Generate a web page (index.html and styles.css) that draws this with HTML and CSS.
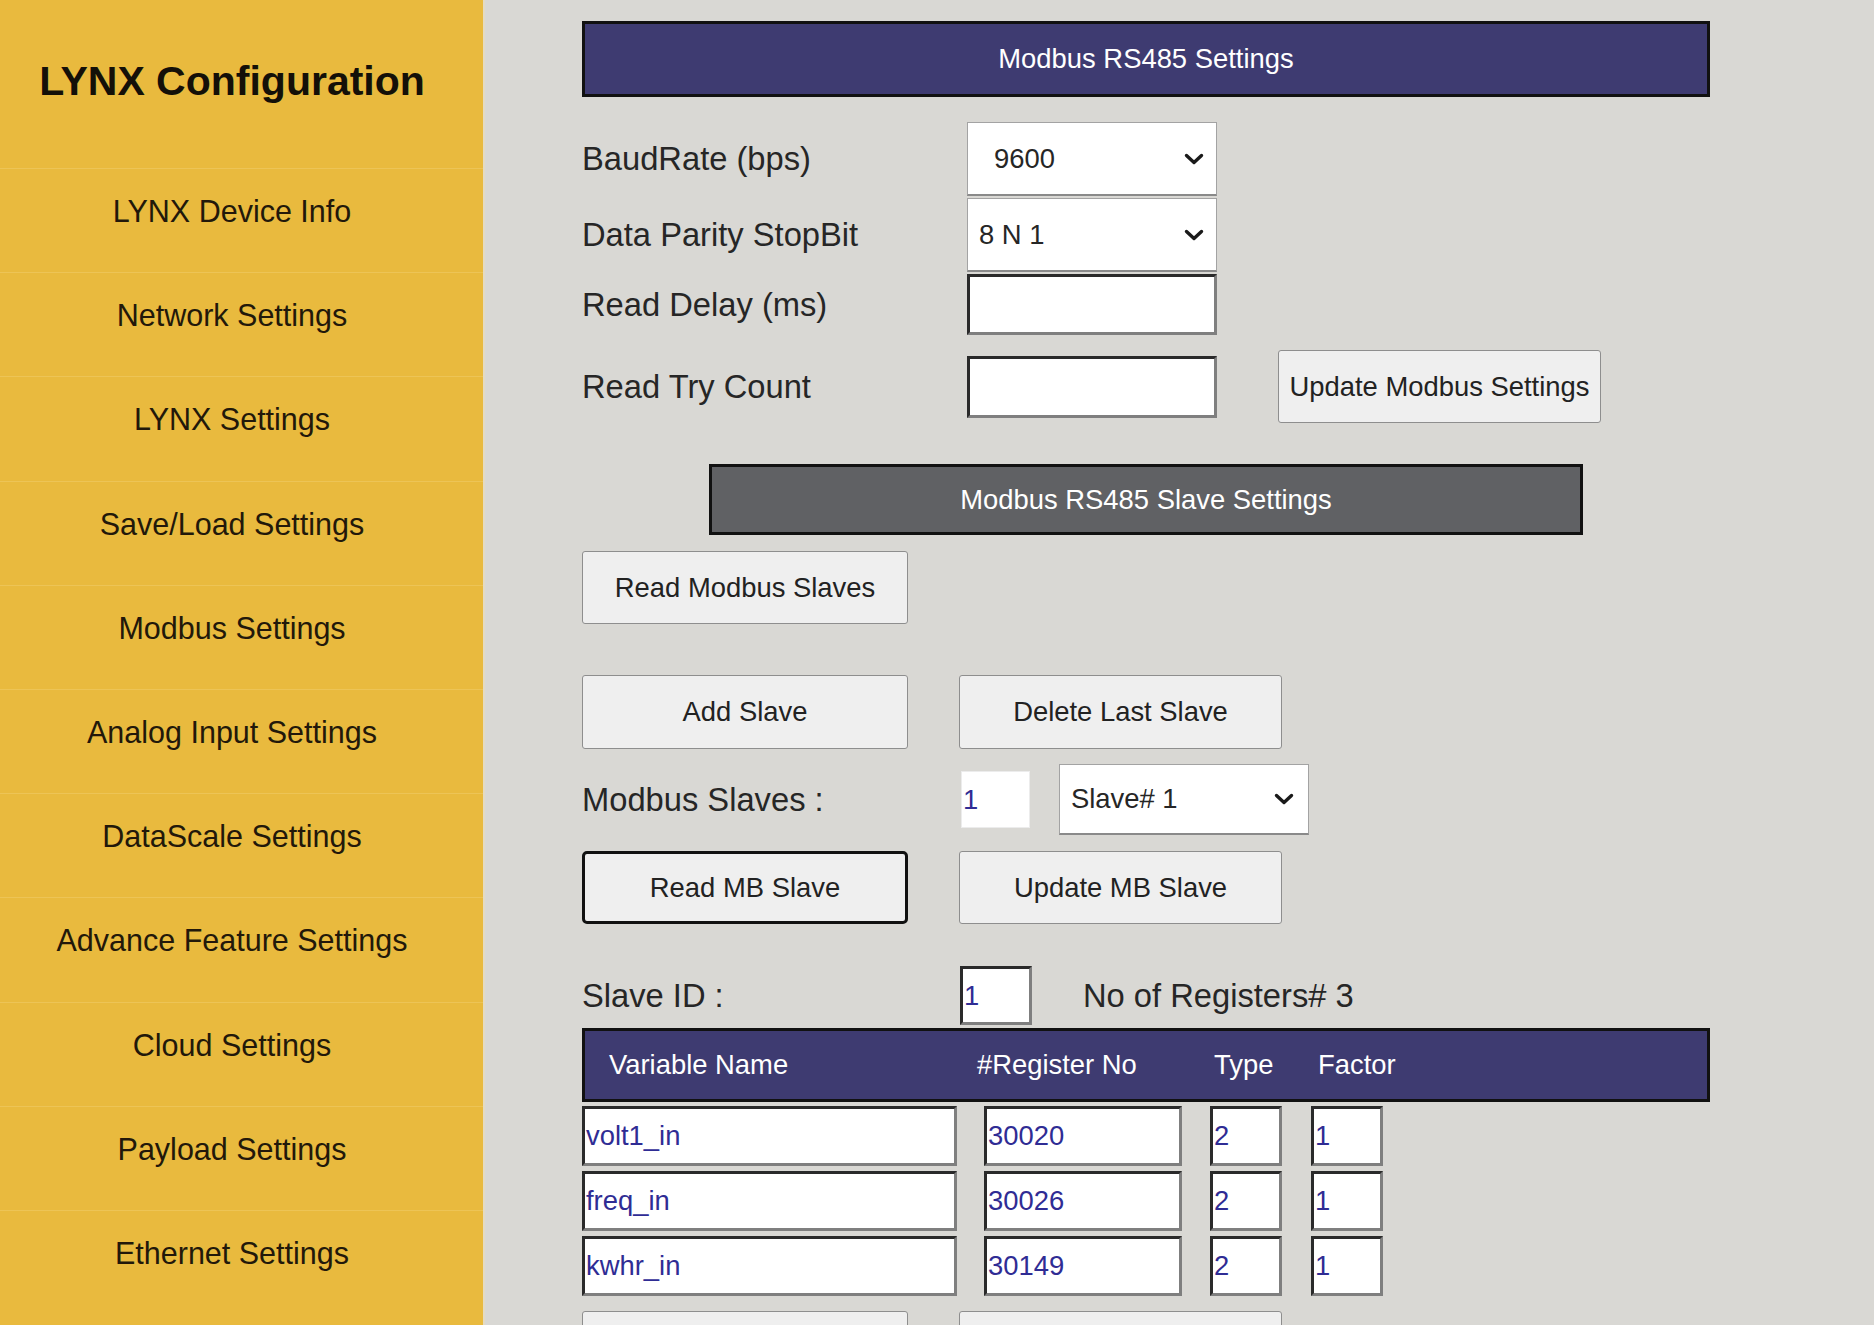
FILE: index.html
```html
<!DOCTYPE html>
<html lang="en">
<head>
<meta charset="utf-8">
<title>LYNX Configuration</title>
<link rel="stylesheet" href="styles.css">
</head>
<body>
<aside class="sidebar">
  <h1 class="brand">LYNX Configuration</h1>
  <nav class="menu">
    <a class="menu-item">LYNX Device Info</a>
    <a class="menu-item">Network Settings</a>
    <a class="menu-item">LYNX Settings</a>
    <a class="menu-item">Save/Load Settings</a>
    <a class="menu-item">Modbus Settings</a>
    <a class="menu-item">Analog Input Settings</a>
    <a class="menu-item">DataScale Settings</a>
    <a class="menu-item">Advance Feature Settings</a>
    <a class="menu-item">Cloud Settings</a>
    <a class="menu-item">Payload Settings</a>
    <a class="menu-item">Ethernet Settings</a>
  </nav>
</aside>
<main class="main">
  <div class="bar bar-navy">Modbus RS485 Settings</div>

  <div class="row row-baud">
    <span class="label">BaudRate (bps)</span>
    <div class="select select-wide"><span class="sel-text sel-indent">9600</span>
      <svg class="chev" viewBox="0 0 20 12" width="20" height="12"><path d="M2.5 2.5 L10 9.5 L17.5 2.5"/></svg></div>
  </div>
  <div class="row row-parity">
    <span class="label">Data Parity StopBit</span>
    <div class="select select-wide"><span class="sel-text">8 N 1</span>
      <svg class="chev" viewBox="0 0 20 12" width="20" height="12"><path d="M2.5 2.5 L10 9.5 L17.5 2.5"/></svg></div>
  </div>
  <div class="row row-delay">
    <span class="label">Read Delay (ms)</span>
    <div class="field field-delay"></div>
  </div>
  <div class="row row-try">
    <span class="label">Read Try Count</span>
    <div class="field field-try"></div>
    <button class="btn btn-update">Update Modbus Settings</button>
  </div>

  <div class="bar bar-gray">Modbus RS485 Slave Settings</div>

  <div class="row row-readall">
    <button class="btn btn-left">Read Modbus Slaves</button>
  </div>

  <div class="row row-add">
    <button class="btn btn-left">Add Slave</button>
    <button class="btn btn-right">Delete Last Slave</button>
  </div>

  <div class="row row-slaves">
    <span class="label label-slaves">Modbus Slaves :</span>
    <div class="count-box">1</div>
    <div class="select select-slave"><span class="sel-text">Slave# 1</span>
      <svg class="chev" viewBox="0 0 20 12" width="20" height="12"><path d="M2.5 2.5 L10 9.5 L17.5 2.5"/></svg></div>
  </div>

  <div class="row row-mb">
    <button class="btn btn-left btn-focus">Read MB Slave</button>
    <button class="btn btn-right">Update MB Slave</button>
  </div>

  <div class="row row-id">
    <span class="label label-id">Slave ID :</span>
    <div class="field field-id val">1</div>
    <span class="label reg-count">No of Registers# 3</span>
  </div>

  <div class="bar bar-navy table-head">
    <span>Variable Name</span>
    <span>#Register No</span>
    <span>Type</span>
    <span>Factor</span>
  </div>

  <div class="reg-rows">
    <div class="reg-row">
      <div class="field val c-name">volt1_in</div>
      <div class="field val c-reg">30020</div>
      <div class="field val c-type">2</div>
      <div class="field val c-fac">1</div>
    </div>
    <div class="reg-row">
      <div class="field val c-name">freq_in</div>
      <div class="field val c-reg">30026</div>
      <div class="field val c-type">2</div>
      <div class="field val c-fac">1</div>
    </div>
    <div class="reg-row">
      <div class="field val c-name">kwhr_in</div>
      <div class="field val c-reg">30149</div>
      <div class="field val c-type">2</div>
      <div class="field val c-fac">1</div>
    </div>
  </div>

  <div class="row row-bottom">
    <button class="btn btn-left" aria-label="Read registers"></button>
    <button class="btn btn-right" aria-label="Update registers"></button>
  </div>
</main>
</body>
</html>
```
FILE: styles.css
```css
html, body {
  margin: 0;
  padding: 0;
}
body {
  width: 1874px;
  height: 1325px;
  overflow: hidden;
  display: flex;
  font-family: "Liberation Sans", Arial, sans-serif;
  background: #d9d8d4;
}

/* ---------- sidebar ---------- */
.sidebar {
  width: 485px;
  flex: 0 0 485px;
  box-sizing: border-box;
  background: #e9ba3e;
  border-right: 2px solid #e4dbc2;
  height: 1325px;
}
.brand {
  margin: 0;
  height: 168px;
  box-sizing: border-box;
  padding: 56px 19px 0 0;
  line-height: 50px;
  font-size: 41px;
  font-weight: bold;
  color: #141008;
  text-align: center;
}
.menu {
  display: flex;
  flex-direction: column;
}
.menu-item {
  display: block;
  height: 104.2px;
  box-sizing: border-box;
  padding: 22px 19px 0 0;
  line-height: 40px;
  font-size: 30.5px;
  color: #22180a;
  text-align: center;
  border-top: 1px solid #edc456;
}

/* ---------- main ---------- */
.main {
  flex: 1;
  padding-left: 97px;
  background: #d9d8d4;
  color: #222;
}
.bar {
  box-sizing: border-box;
  border: 3px solid #111;
  color: #fff;
  font-size: 27.4px;
  display: flex;
  align-items: center;
  justify-content: center;
}
.bar-navy {
  width: 1128px;
  height: 76px;
  margin-top: 21px;
  background: #3e3b71;
}
.bar-gray {
  width: 874px;
  height: 71px;
  margin-top: 41px;
  margin-left: 127px;
  background: #606164;
}

.row {
  display: flex;
  align-items: center;
}
.label {
  width: 385px;
  flex: 0 0 auto;
  font-size: 32.7px;
  color: #262626;
}

.select {
  box-sizing: border-box;
  background: #fff;
  border: 1px solid #a3a3a3;
  border-bottom: 2px solid #8a8a8a;
  display: flex;
  align-items: center;
  justify-content: space-between;
  font-size: 27.4px;
  color: #262626;
}
.select-wide {
  width: 250px;
  height: 74px;
  padding: 0 12px 0 11px;
}
.sel-indent {
  padding-left: 15px;
}
.chev {
  display: block;
  fill: none;
  stroke: #1a1a1a;
  stroke-width: 3.4;
  stroke-linecap: round;
  stroke-linejoin: round;
}

.field {
  box-sizing: border-box;
  background: #fff;
  border-style: solid;
  border-width: 3px;
  border-color: #2a2a2a #7f7f7f #7f7f7f #2a2a2a;
}
.val {
  display: flex;
  align-items: center;
  padding-left: 1px;
  font-size: 27.4px;
  color: #2f2c94;
}

.row-baud { margin-top: 25px; height: 74px; }
.row-parity { margin-top: 2px; height: 74px; }
.row-delay { margin-top: 2px; height: 61px; }
.field-delay { width: 250px; height: 61px; }
.row-try { margin-top: 15px; height: 73px; }
.field-try { width: 250px; height: 62px; }

.btn {
  box-sizing: border-box;
  height: 73px;
  padding: 0;
  background: #efefef;
  border: 1px solid #8e8e8e;
  border-radius: 3px;
  font-family: "Liberation Sans", Arial, sans-serif;
  font-size: 27.4px;
  color: #222;
  display: flex;
  align-items: center;
  justify-content: center;
}
.btn-update {
  width: 323px;
  margin-left: 61px;
}
.btn-left { width: 326px; }
.btn-right { width: 323px; margin-left: 51px; }
.btn-focus {
  border: 3px solid #111;
  border-radius: 5px;
}

.row-readall { margin-top: 16px; }
.row-add { margin-top: 51px; height: 74px; }
.row-add .btn { height: 74px; }

.row-slaves { margin-top: 15px; height: 71px; }
.label-slaves { width: 379px; }
.count-box {
  box-sizing: border-box;
  width: 69px;
  height: 57px;
  background: #fff;
  border: 1px solid #ececec;
  display: flex;
  align-items: center;
  padding-left: 1px;
  font-size: 27.4px;
  color: #2f2c94;
}
.select-slave {
  width: 250px;
  height: 71px;
  margin-left: 29px;
  padding: 0 14px 0 11px;
}

.row-mb { margin-top: 16px; }

.row-id { margin-top: 42px; height: 59px; }
.label-id { width: 378px; }
.field-id { width: 72px; height: 59px; }
.reg-count { width: auto; margin-left: 51px; }

.table-head {
  margin-top: 3px;
  height: 74px;
  justify-content: flex-start;
  display: grid;
  grid-template-columns: 368px 237px 104px auto;
  align-items: center;
  padding-left: 24px;
}

.reg-rows {
  margin-top: 4px;
  display: flex;
  flex-direction: column;
  gap: 5px;
}
.reg-row {
  display: flex;
  height: 60px;
}
.reg-row .field { height: 60px; }
.c-name { width: 375px; }
.c-reg { width: 198px; margin-left: 27px; }
.c-type { width: 72px; margin-left: 28px; }
.c-fac { width: 72px; margin-left: 29px; }

.row-bottom { margin-top: 15px; }
```
